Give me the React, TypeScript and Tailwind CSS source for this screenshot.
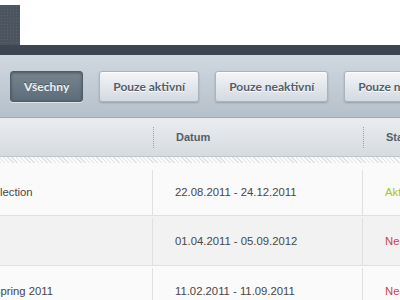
import React from 'react';

const filters = [
  { label: 'Všechny', active: true },
  { label: 'Pouze aktivní', active: false },
  { label: 'Pouze neaktivní', active: false },
  { label: 'Pouze nepotvrzené', active: false },
];

const rows = [
  { name: 'Collection', shift: '-ml-[17px]', date: '22.08.2011 - 24.12.2011', status: 'Aktivní', ok: true, bg: 'bg-[#fafafa]', h: 'h-[53px] pt-[7px]' },
  { name: 'Promo', shift: '-ml-[60px]', date: '01.04.2011 - 05.09.2012', status: 'Neaktivní', ok: false, bg: 'bg-[#f2f2f2]', h: 'h-[50px] pt-[2px]' },
  { name: 'Spring 2011', shift: '-ml-[7px]', date: '11.02.2011 - 11.09.2011', status: 'Neaktivní', ok: false, bg: 'bg-[#fafafa]', h: 'h-[50px] pt-[2px]' },
];

function FilterButton({ label, active }: { label: string; active: boolean }) {
  if (active) {
    return (
      <button className="h-[31px] flex-none rounded-[3px] border border-[#4f5c69] bg-gradient-to-b from-[#76858f] to-[#5d6c79] px-[13px] text-[12px] font-bold text-[#eef2f5] shadow-[inset_0_1px_3px_rgba(0,0,0,0.35),0_1px_0_rgba(255,255,255,0.5)] [text-shadow:0_-1px_0_rgba(0,0,0,0.35)] font-['Lato','Open_Sans',sans-serif]">
        {label}
      </button>
    );
  }
  return (
    <button className="h-[31px] flex-none rounded-[3px] border border-[#a9b4bf] bg-gradient-to-b from-[#f3f5f8] to-[#d3dae1] px-[13px] text-[12px] font-bold text-[#525d69] shadow-[0_1px_2px_rgba(0,0,0,0.2),inset_0_1px_0_#ffffff] [text-shadow:0_1px_0_#ffffff] font-['Lato','Open_Sans',sans-serif]">
      {label}
    </button>
  );
}

export default function App() {
  return (
    <div className="w-[400px] h-[300px] overflow-hidden bg-white font-['Liberation_Sans',Arial,sans-serif]">
      <div className="flex h-[45px]">
        <div className="mt-[5px] w-[20px] bg-[#4b545f] bg-[image:radial-gradient(#5a646f_0.8px,transparent_0.8px)] bg-[length:3px_3px]" />
        <div className="flex-1 bg-white" />
      </div>
      <div className="h-[10px] bg-[#3e4751]" />

      <div className="flex h-[63px] gap-[16px] overflow-hidden whitespace-nowrap border-b border-[#9eaab6] bg-gradient-to-b from-[#d0d8e0] to-[#b5c0ca] pl-[10px] pt-[16px]">
        {filters.map((f) => (
          <FilterButton key={f.label} label={f.label} active={f.active} />
        ))}
      </div>

      <div className="flex h-[39px] items-center whitespace-nowrap border-b border-[#bfc5cb] bg-gradient-to-b from-[#eaedf0] to-[#d6dbe0] text-[11px] font-bold text-[#555e68]">
        <div className="w-[153px] flex-none" />
        <div className="h-[21px] w-0 flex-none border-l border-dotted border-[#9aa3ad]" />
        <div className="w-[209px] flex-none pl-[22px]">Datum</div>
        <div className="h-[21px] w-0 flex-none border-l border-dotted border-[#9aa3ad]" />
        <div className="pl-[22px]">Stav</div>
      </div>

      <div className="h-[6px] bg-[#fbfbfb] bg-[image:repeating-linear-gradient(45deg,#dfe1e3_0_1px,transparent_1px_3px)]" />

      {rows.map((r) => (
        <div key={r.date} className={`flex whitespace-nowrap border-b border-[#e0e0e0] text-[11.3px] text-[#474747] ${r.bg} ${r.h}`}>
          <div className="flex w-[153px] flex-none items-center overflow-hidden border-r border-[#e0e0e0]">
            <span className={r.shift}>{r.name}</span>
          </div>
          <div className="flex w-[210px] flex-none items-center border-r border-[#e0e0e0] pl-[22px]">{r.date}</div>
          <div className={`flex items-center pl-[22px] ${r.ok ? 'text-[#a4c52c]' : 'text-[#cf443c]'}`}>{r.status}</div>
        </div>
      ))}
    </div>
  );
}
